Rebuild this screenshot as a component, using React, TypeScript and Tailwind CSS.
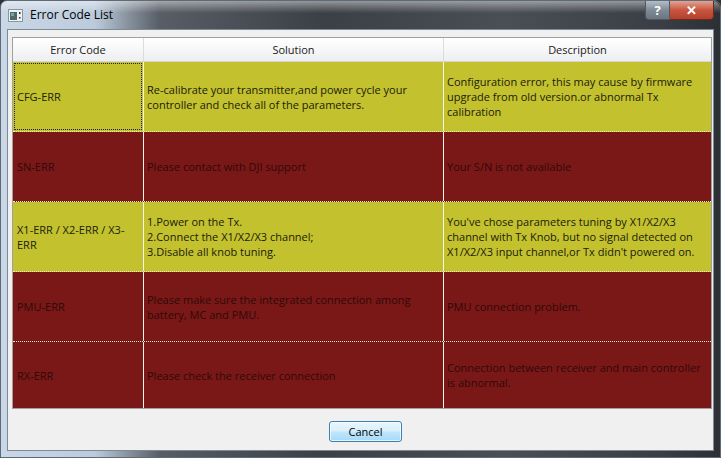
import React from 'react';

type Row = {
  code: string;
  solution: React.ReactNode;
  description: string;
  tone: 'yellow' | 'red';
};

const rows: Row[] = [
  {
    code: 'CFG-ERR',
    solution: 'Re-calibrate your transmitter,and power cycle your controller and check all of the parameters.',
    description: 'Configuration error, this may cause by firmware upgrade from old version.or abnormal Tx calibration',
    tone: 'yellow',
  },
  {
    code: 'SN-ERR',
    solution: 'Please contact with DJI support',
    description: 'Your S/N is not available',
    tone: 'red',
  },
  {
    code: 'X1-ERR / X2-ERR / X3-ERR',
    solution: (
      <>
        1.Power on the Tx.
        <br />
        2.Connect the X1/X2/X3 channel;
        <br />
        3.Disable all knob tuning.
      </>
    ),
    description:
      "You've chose parameters tuning by X1/X2/X3 channel with Tx Knob, but no signal detected on X1/X2/X3 input channel,or Tx didn't powered on.",
    tone: 'yellow',
  },
  {
    code: 'PMU-ERR',
    solution: 'Please make sure the integrated connection among battery, MC and PMU.',
    description: 'PMU connection problem.',
    tone: 'red',
  },
  {
    code: 'RX-ERR',
    solution: 'Please check the receiver connection',
    description: 'Connection between receiver and main controller is abnormal.',
    tone: 'red',
  },
];

const font = { fontFamily: '"Open Sans", "Noto Sans", sans-serif' };

function WindowIcon() {
  return (
    <svg width="15" height="13" viewBox="0 0 15 13">
      <rect x="0.5" y="0.5" width="14" height="12" fill="#eef2f5" stroke="#8a96a0" />
      <rect x="2" y="3" width="7" height="8" fill="#4e6a66" />
      <rect x="3" y="4" width="3" height="3" fill="#7fa39c" />
      <rect x="11" y="3" width="1.5" height="2" fill="#333" />
      <rect x="11" y="8" width="1.5" height="1.5" fill="#333" />
    </svg>
  );
}

export default function App() {
  return (
    <div className="w-[721px] h-[458px] overflow-hidden bg-[#2e3136]" style={font}>
      <div className="relative flex flex-col w-full h-full rounded-t-[7px] border border-[#5d6a78] bg-[linear-gradient(to_right,#c9d7e6_0%,#bccbdb_13%,#585e66_22%,#3b4046_45%,#4a4f56_70%,#3a3e44_92%,#2c2f34_100%)]">
        {/* glass highlight */}
        <div className="absolute inset-x-0 top-0 h-[12px] rounded-t-[7px] bg-[linear-gradient(to_bottom,rgba(255,255,255,0.45),rgba(255,255,255,0))] pointer-events-none" />

        {/* title bar */}
        <div className="relative flex items-center h-[28px] pl-[7px]">
          <WindowIcon />
          <span className="ml-[7px] text-[12px] text-black leading-none">Error Code List</span>
          <div className="ml-auto mr-[6px] self-start flex">
            <div className="w-[25px] h-[19px] flex items-center justify-center rounded-bl-[4px] border border-t-0 border-[#4f5962] bg-[linear-gradient(to_bottom,#b4bec8,#7f8b97_50%,#6a7581)] text-white text-[13px] font-bold leading-none">
              ?
            </div>
            <div className="w-[44px] h-[19px] flex items-center justify-center rounded-br-[4px] border border-l-0 border-t-0 border-[#6a2a1e] bg-[linear-gradient(to_bottom,#e2a494,#c8563f_50%,#b3402b)] text-white text-[13px] font-bold leading-none">
              ✕
            </div>
          </div>
        </div>

        {/* client area */}
        <div className="flex flex-col ml-[6px] mr-[6px] mb-[6px] flex-1 bg-[#f0f0f0] border border-[#7d8b99] pt-[7px] pl-[4px] pr-[1px]">
          <div className="flex flex-col h-[372px] border border-[#a0a0a0] overflow-hidden text-[11px] leading-[15px]">
            {/* header */}
            <div className="grid grid-cols-[131px_300px_1fr] h-[24px] shrink-0 border-b border-[#d5d5d5] bg-[linear-gradient(to_bottom,#ffffff,#f6f7f8_50%,#eceef0)] text-[#1a1a1a]">
              <div className="flex items-center justify-center border-r border-[#dcdcdc]">Error Code</div>
              <div className="flex items-center justify-center border-r border-[#dcdcdc]">Solution</div>
              <div className="flex items-center justify-center">Description</div>
            </div>
            {rows.map((r, i) => {
              const yellow = r.tone === 'yellow';
              const last = i === rows.length - 1;
              return (
                <div
                  key={r.code}
                  className={`grid grid-cols-[131px_300px_1fr] ${
                    last ? 'flex-1' : 'h-[70px] shrink-0 border-b border-dotted border-[#ece9c8]'
                  } ${yellow ? 'bg-[#c3c22e] text-[#20200c]' : 'bg-[#7a1818] text-[#300909]'}`}
                >
                  <div className="flex items-center border-r border-[#f4f4ea] p-[1px]">
                    <div
                      className={`flex items-center h-full w-full pl-[2px] pr-[4px] ${
                        i === 0 ? 'border border-dotted border-[#222]' : 'border border-transparent'
                      }`}
                    >
                      {r.code}
                    </div>
                  </div>
                  <div className="flex items-center border-r border-[#f4f4ea] pl-[3px] pr-[6px]">
                    <div>{r.solution}</div>
                  </div>
                  <div className="flex items-center pl-[3px] pr-[6px]">
                    <div>{r.description}</div>
                  </div>
                </div>
              );
            })}
          </div>

          {/* footer */}
          <div className="flex flex-1 items-center justify-center pl-[7px] pt-[4px]">
            <button className="w-[73px] h-[21px] rounded-[3px] border border-[#3c7fb1] bg-[linear-gradient(to_bottom,#eaf6fd_0%,#d9f0fc_45%,#bee6fd_55%,#a7d9f5_100%)] shadow-[inset_0_0_0_1px_rgba(255,255,255,0.7)] text-[11px] text-black leading-none">
              Cancel
            </button>
          </div>
        </div>
      </div>
    </div>
  );
}
